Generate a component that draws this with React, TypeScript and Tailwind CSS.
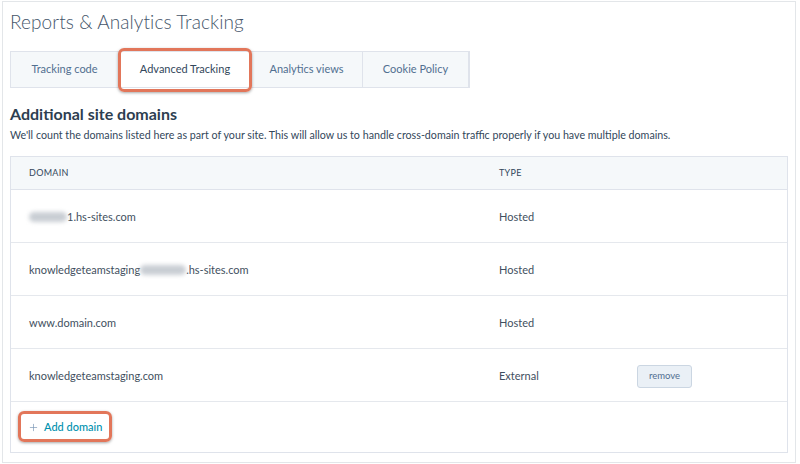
import { Plus } from "lucide-react"

const tabs = ["Tracking code", "Advanced Tracking", "Analytics views", "Cookie Policy"]

function Blur({ w }: { w: number }) {
  return (
    <span
      className="inline-block h-[10px] rounded-full bg-[#c9ced4] align-middle blur-[2px]"
      style={{ width: w }}
    />
  )
}

const rows = [
  { domain: <><Blur w={38} />1.hs-sites.com</>, type: "Hosted" },
  { domain: <>knowledgeteamstaging<Blur w={46} />.hs-sites.com</>, type: "Hosted" },
  { domain: <>www.domain.com</>, type: "Hosted" },
  { domain: <>knowledgeteamstaging.com</>, type: "External", remove: true },
]

export default function App() {
  return (
    <div className="h-[464px] w-[800px] bg-white p-[1px_4px_1px_2px] font-['Lato',sans-serif] text-[#33475b]">
      <div className="h-full border border-[#e3e6e9] px-[7px] pt-[7px]">
        <h1 className="text-[19px] font-light leading-[26px] tracking-[0.1px] text-[#45556a]">
          Reports &amp; Analytics Tracking
        </h1>

        <div className="mt-[16px] flex h-[37px] w-fit border border-[#dfe3eb] bg-[#f5f8fa]">
          {tabs.map((t, i) => (
            <div
              key={t}
              className={
                i === 1
                  ? "relative flex w-[132px] items-center justify-center bg-white text-[11px] text-[#33475b]"
                  : "flex items-center justify-center border-r border-[#dfe3eb] text-[11px] text-[#516f90] " +
                    (i === 0 ? "w-[108px]" : i === 2 ? "w-[112px]" : "w-[106px]")
              }
            >
              {t}
              {i === 1 && (
                <span className="absolute inset-x-[-1px] top-[-4px] bottom-[-5px] rounded-[6px] border-[3px] border-[#e2765a] shadow-[0_1px_3px_rgba(0,0,0,0.35)]" />
              )}
            </div>
          ))}
        </div>

        <h2 className="mt-[16px] text-[16px] font-bold leading-[20px] text-[#2d3e50]">Additional site domains</h2>
        <p className="mt-[4px] text-[10.7px] leading-[14px] text-[#33475b]">
          We'll count the domains listed here as part of your site. This will allow us to handle cross-domain
          traffic properly if you have multiple domains.
        </p>

        <div className="mt-[14px] border border-[#dfe3eb]">
          <div className="flex h-[33px] items-center border-b border-[#dfe3eb] bg-[#f5f8fa] text-[9px] uppercase tracking-[0.3px] text-[#33475b]">
            <div className="w-[488px] pl-[18px]">Domain</div>
            <div>Type</div>
          </div>
          {rows.map((r, i) => (
            <div key={i} className="flex h-[53px] items-center border-b border-[#e5e8ed] pt-[2px] text-[11px] text-[#3f4f60]">
              <div className="flex w-[488px] items-center pl-[18px]">{r.domain}</div>
              <div className="w-[138px]">{r.type}</div>
              {r.remove && (
                <button className="h-[23px] w-[55px] rounded-[3px] border border-[#cbd6e2] bg-[#eaf0f6] text-[9.5px] text-[#506e91]">
                  remove
                </button>
              )}
            </div>
          ))}
          <div className="flex h-[50px] items-center pl-[13px]">
            <div className="relative flex items-center gap-[5px] px-[4px] text-[11px] text-[#0091ae]">
              <Plus size={11} strokeWidth={1.5} className="text-[#7c98b6]" />
              <span className="font-medium">Add domain</span>
              <span className="absolute inset-x-[-6px] top-[-8px] bottom-[-7px] rounded-[6px] border-[3px] border-[#e2765a] shadow-[0_1px_3px_rgba(0,0,0,0.35)]" />
            </div>
          </div>
        </div>
      </div>
    </div>
  )
}
